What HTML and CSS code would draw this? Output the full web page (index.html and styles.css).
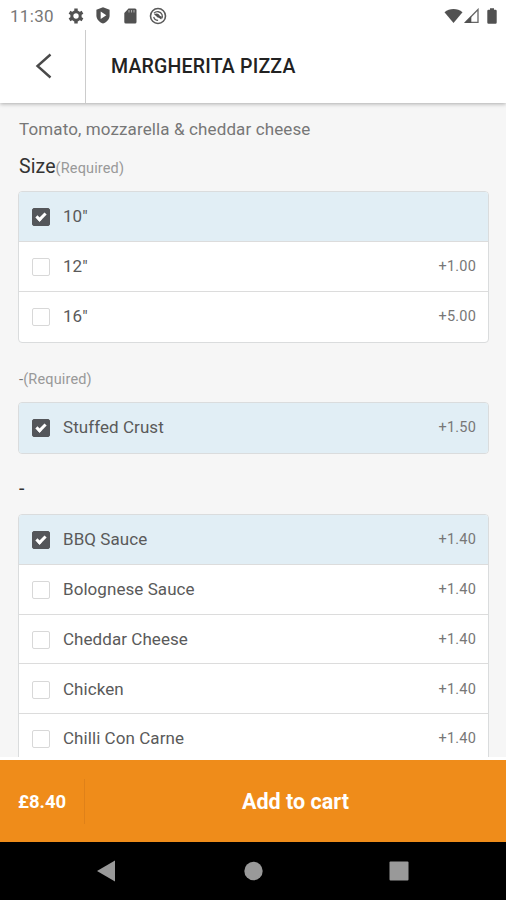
FILE: index.html
```html
<!DOCTYPE html>
<html lang="en">
<head>
  <meta charset="UTF-8">
  <title>Margherita Pizza</title>
  <link rel="stylesheet" href="styles.css">
</head>
<body>
<div id="app">
  <header>
    <div class="status">
      <span class="time">11:30</span>
      <svg class="gear" width="16" height="16" viewBox="0 0 16 16">
        <circle cx="8" cy="8" r="4.2" fill="none" stroke="#515151" stroke-width="3"/>
        <path d="M8 .5v3M8 12.5v3M1.5 4.2l2.6 1.5M11.9 10.3l2.6 1.5M1.5 11.8l2.6-1.5M11.9 5.7l2.6-1.5" stroke="#515151" stroke-width="3.4"/>
      </svg>
      <svg class="shield" width="14" height="17" viewBox="0 0 14 17">
        <path d="M7 .3l6.6 2.5v5.4c0 3.8-2.6 6.9-6.6 8.3C3 15.1.4 12 .4 8.2V2.8z" fill="#515151"/>
        <path d="M4.7 4.5l5.6 3.7-5.6 3.7z" fill="#fff"/>
      </svg>
      <svg class="sd" width="13" height="16" viewBox="0 0 13 16">
        <path d="M4.5.5H11A1.5 1.5 0 0 1 12.5 2v12a1.5 1.5 0 0 1-1.5 1.5H1.8A1.5 1.5 0 0 1 .3 14V5z" fill="#515151"/>
        <path d="M5 2v2.5M7.5 2v2.5M10 2v2.5" stroke="#aaa" stroke-width="1.1"/>
      </svg>
      <svg class="sync" width="18" height="18" viewBox="0 0 18 18">
        <circle cx="9" cy="9" r="7.5" fill="none" stroke="#5a5a5a" stroke-width="1.6"/>
        <path d="M5 6.3c2.3-2.6 6.6-1.900 8 1.2.6 1.4.4 2.8-.4 4M4.7 9.800c.5 2 2.1 3.4 4.4 3.5" fill="none" stroke="#5a5a5a" stroke-width="1.3"/>
        <path d="M5 7.500C7.500 5.800 10 6.500 11 9l1.800.4-.6 3.100-2.400-1.700C8 10.800 7.300 8.500 5 7.500z" fill="#515151"/>
      </svg>
      <div class="signals">
        <svg width="19" height="16" viewBox="0 0 19 16">
          <path d="M.5 4.3C5.500-.1 13.500-.1 18.500 4.300L9.500 15z" fill="#515151"/>
        </svg>
        <svg class="cell" width="15" height="16" viewBox="0 0 15 16">
          <path d="M1.5 14.3L14 1.5v12.8z" fill="none" stroke="#666" stroke-width="1.3"/>
          <path d="M.5 15l6.800-7v7z" fill="#515151"/>
        </svg>
        <svg class="battery" width="10" height="16" viewBox="0 0 10 16">
          <path d="M3 .3h4v1.500h1.500a1.200 1.200 0 0 1 1.200 1.200v11.500a1.200 1.200 0 0 1-1.200 1.200h-7a1.200 1.200 0 0 1-1.200-1.200V3a1.200 1.200 0 0 1 1.200-1.200H3z" fill="#515151"/>
        </svg>
      </div>
    </div>
    <div class="bar">
      <div class="back">
        <svg width="18" height="26" viewBox="0 0 18 26">
          <path d="M15.5 1.5L2.5 13l13 11.5" fill="none" stroke="#4a4a4a" stroke-width="2.4"/>
        </svg>
      </div>
      <h1>MARGHERITA PIZZA</h1>
    </div>
  </header>

  <main>
    <p class="desc">Tomato, mozzarella &amp; cheddar cheese</p>

    <h2>Size<small>(Required)</small></h2>
    <ul class="list size">
      <li class="on"><i class="check"></i><span>10"</span></li>
      <li><i class="check"></i><span>12"</span><b>+1.00</b></li>
      <li><i class="check"></i><span>16"</span><b>+5.00</b></li>
    </ul>

    <h2 class="crust-title"><em>-</em><small>(Required)</small></h2>
    <ul class="list crust">
      <li class="on"><i class="check"></i><span>Stuffed Crust</span><b>+1.50</b></li>
    </ul>

    <h2 class="topping-title">-</h2>
    <ul class="list toppings">
      <li class="on"><i class="check"></i><span>BBQ Sauce</span><b>+1.40</b></li>
      <li><i class="check"></i><span>Bolognese Sauce</span><b>+1.40</b></li>
      <li><i class="check"></i><span>Cheddar Cheese</span><b>+1.40</b></li>
      <li><i class="check"></i><span>Chicken</span><b>+1.40</b></li>
      <li><i class="check"></i><span>Chilli Con Carne</span><b>+1.40</b></li>
    </ul>
  </main>

  <div class="cart">
    <div class="total">£8.40</div>
    <div class="add">Add to cart</div>
  </div>

  <div class="nav">
    <svg width="20" height="22" viewBox="0 0 20 22"><path d="M1 11L19 .5v21z" fill="#999"/></svg>
    <svg width="20" height="20" viewBox="0 0 20 20"><circle cx="10.5" cy="10" r="9.2" fill="#999"/></svg>
    <svg width="20" height="20" viewBox="0 0 20 20"><rect x=".5" y=".5" width="19" height="19" rx="1" fill="#999"/></svg>
  </div>
</div>
</body>
</html>
```
FILE: styles.css
```css
* {
  margin: 0;
  padding: 0;
  box-sizing: border-box;
}
body {
  font-family: Roboto, "Liberation Sans", sans-serif;
  background: #f6f6f6;
}
svg {
  display: block;
  flex: none;
}
#app {
  width: 506px;
  height: 900px;
  display: flex;
  flex-direction: column;
  overflow: hidden;
}
header {
  height: 103px;
  flex: none;
  background: #fff;
  box-shadow: 0 1px 4px rgba(0, 0, 0, .3);
  position: relative;
}

/* status bar */
.status {
  height: 30px;
  padding: 1px 9px 0 10px;
  display: flex;
  align-items: center;
}
.time {
  width: 58px;
  font-size: 17px;
  letter-spacing: .3px;
  color: #777;
}
.shield {
  margin-left: 12px;
}
.sd {
  margin-left: 14px;
}
.sync {
  margin-left: 12px;
}
.signals {
  margin-left: auto;
  display: flex;
}
.signals .cell {
  margin-left: 1px;
}
.signals .battery {
  margin-left: 8px;
}

/* title bar */
.bar {
  height: 73px;
  display: flex;
  align-items: center;
}
.back {
  width: 86px;
  height: 73px;
  padding: 0 0 2px 35px;
  border-right: 1px solid #ccc;
  display: flex;
  align-items: center;
}
h1 {
  margin: -1px 0 0 25px;
  font-size: 19.5px;
  font-weight: 500;
  letter-spacing: .2px;
  color: #222;
}

main {
  flex: 1;
  padding: 16px 17px 0 18px;
  border-bottom: 3px solid #fff;
  overflow: hidden;
}
.desc {
  padding-left: 1px;
  font-size: 17px;
  line-height: 20px;
  letter-spacing: .12px;
  color: #777;
}
h2 {
  margin-top: 16px;
  padding-left: 1px;
  font-size: 19.5px;
  line-height: 24px;
  font-weight: 400;
  letter-spacing: .1px;
  color: #333;
}
h2 small {
  font-size: 14.5px;
  letter-spacing: .15px;
  color: #999;
}
h2 em {
  font-size: 15px;
  font-style: normal;
  color: #777;
}
.crust-title {
  margin-top: 23px;
}
.topping-title {
  margin-top: 23px;
}
.list {
  list-style: none;
  border: 1px solid #dadcdd;
  border-radius: 4px;
  background: #fff;
  overflow: hidden;
}
.size {
  height: 152px;
  margin-top: 10px;
}
.crust {
  height: 52px;
  margin-top: 10px;
}
.toppings {
  margin-top: 13px;
}
.list li {
  height: 50px;
  padding: 0 12px 1px 13px;
  border-bottom: 1px solid #dcdcdc;
  display: flex;
  align-items: center;
  color: #5a5a5a;
}
.toppings li {
  height: 49.8px;
  padding-bottom: 0;
}
.list li:last-child {
  padding-bottom: 2px;
  border-bottom: 0;
}
.list .on {
  background: #e1eef5;
}
.list span {
  margin-left: 13px;
  font-size: 17px;
  letter-spacing: .06px;
}
.list b {
  margin: 1px 0 0 auto;
  font-size: 14.5px;
  font-weight: 400;
  letter-spacing: .2px;
  color: #777;
}

/* checkbox */
.check {
  width: 18px;
  height: 18px;
  margin-top: 2px;
  border: 1px solid #d8d8d8;
  border-radius: 2px;
  background: #fff;
}
.on .check {
  border-color: #54565a;
  background: #54565a;
}
.on .check::after {
  content: "";
  display: block;
  width: 7px;
  height: 3px;
  margin: 4px 0 0 3px;
  border: solid #fff;
  border-width: 0 0 3px 3px;
  transform: rotate(-45deg);
}

/* cart button */
.cart {
  height: 82px;
  flex: none;
  display: flex;
  align-items: center;
  background: #ef8c1a;
  color: #fff;
  font-weight: 700;
}
.total {
  width: 85px;
  height: 45px;
  padding-left: 18px;
  border-right: 1px solid #df8119;
  font-size: 18.5px;
  line-height: 46px;
}
.add {
  flex: 1;
  text-align: center;
  font-size: 21.5px;
}

/* android buttons */
.nav {
  height: 58px;
  flex: none;
  padding: 0 97px 0 96px;
  display: flex;
  align-items: center;
  justify-content: space-between;
  background: #000;
}
```
